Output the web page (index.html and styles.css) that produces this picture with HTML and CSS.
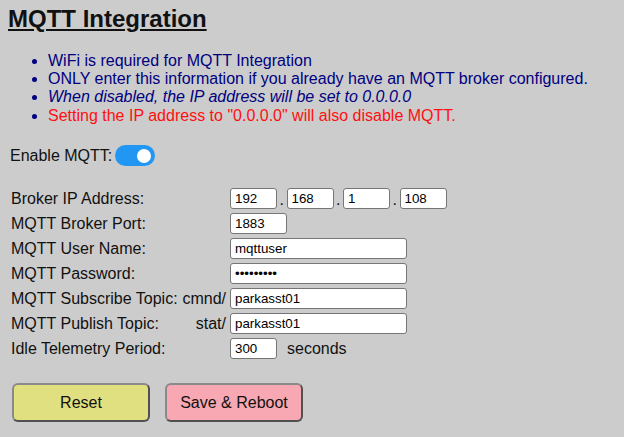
FILE: index.html
```html
<!DOCTYPE html>
<html>
<head>
<meta charset="utf-8">
<link rel="stylesheet" href="styles.css">
</head>
<body>
<div class="page">
  <h1 class="title">MQTT Integration</h1>
  <ul class="notes">
    <li class="info">WiFi is required for MQTT Integration</li>
    <li class="info">ONLY enter this information if you already have an MQTT broker configured.</li>
    <li class="info italic">When disabled, the IP address will be set to 0.0.0.0</li>
    <li class="warn">Setting the IP address to "0.0.0.0" will also disable MQTT.</li>
  </ul>
  <div class="enable">
    <span class="enable-label">Enable MQTT:</span>
    <span class="toggle"><span class="knob"></span></span>
  </div>
  <div class="form">
    <div class="label">Broker IP Address:</div>
    <div class="field">
      <input class="in ip" type="text" value="192"><span class="dot">.</span><input class="in ip" type="text" value="168"><span class="dot">.</span><input class="in ip" type="text" value="1"><span class="dot">.</span><input class="in ip" type="text" value="108">
    </div>
    <div class="label">MQTT Broker Port:</div>
    <div class="field"><input class="in port" type="text" value="1883"></div>
    <div class="label">MQTT User Name:</div>
    <div class="field"><input class="in wide" type="text" value="mqttuser"></div>
    <div class="label">MQTT Password:</div>
    <div class="field"><input class="in wide" type="password" value="123456789"></div>
    <div class="label"><span>MQTT Subscribe Topic:</span><span>cmnd/</span></div>
    <div class="field"><input class="in wide" type="text" value="parkasst01"></div>
    <div class="label"><span>MQTT Publish Topic:</span><span>stat/</span></div>
    <div class="field"><input class="in wide" type="text" value="parkasst01"></div>
    <div class="label">Idle Telemetry Period:</div>
    <div class="field"><input class="in ip" type="text" value="300"><span class="unit">seconds</span></div>
  </div>
  <div class="buttons">
    <button class="btn reset">Reset</button>
    <button class="btn save">Save &amp; Reboot</button>
  </div>
</div>
</body>
</html>
```
FILE: styles.css
```css
html, body {
  margin: 0;
  padding: 0;
  background: #cccccc;
}
body {
  font-family: "Liberation Sans", Arial, sans-serif;
  font-size: 16px;
  color: #111;
}
.page {
  padding: 5px 0 0 10px;
}
.title {
  margin: 0 0 0 -2px;
  font-size: 24px;
  font-weight: bold;
  text-decoration: underline;
  line-height: 27.6px;
  color: #111;
}
.notes {
  margin: 19px 0 0 0;
  padding-left: 38px;
  line-height: 18.4px;
}
.info { color: #000080; }
.italic { font-style: italic; }
.warn { color: #ff1010; }
.notes li::marker { color: #000080; }
.enable {
  margin-top: 20px;
  display: flex;
  align-items: center;
  height: 21px;
  line-height: 18.4px;
}
.enable-label { margin-right: 3px; }
.toggle {
  width: 40px;
  height: 21px;
  border-radius: 11px;
  background: #2196f3;
  position: relative;
  display: inline-block;
}
.knob {
  position: absolute;
  right: 4px;
  top: 3.5px;
  width: 14px;
  height: 14px;
  border-radius: 50%;
  background: #fff;
}
.form {
  margin-top: 20px;
  display: grid;
  grid-template-columns: 216px auto;
  column-gap: 4px;
  grid-auto-rows: 25px;
  align-items: center;
}
.label {
  display: flex;
  justify-content: space-between;
  line-height: 18.4px;
  padding-left: 1px;
}
.field {
  display: flex;
  align-items: center;
}
.in {
  box-sizing: border-box;
  height: 21px;
  border: 1px solid #767676;
  border-radius: 3px;
  background: #fff;
  padding: 1px 4px;
  font-family: "Liberation Sans", Arial, sans-serif;
  font-size: 13.33px;
  color: #000;
  margin: 0;
}
.ip { width: 47px; }
.port { width: 57px; }
.wide { width: 177px; }
.dot {
  width: 9.5px;
  text-align: center;
  line-height: 18.4px;
  padding-top: 2px;
}
.unit {
  margin-left: 10px;
  line-height: 18.4px;
}
.buttons {
  margin-top: 22px;
  display: flex;
  gap: 15px;
  padding-left: 2px;
}
.btn {
  width: 138px;
  height: 39px;
  box-sizing: border-box;
  border: 2px solid;
  border-color: #8a8a8a #505050 #505050 #8a8a8a;
  border-radius: 6px;
  font-family: "Liberation Sans", Arial, sans-serif;
  font-size: 16px;
  color: #111;
  padding: 0;
}
.reset { background: #e0e080; }
.save { background: #f8a8b2; }
```
